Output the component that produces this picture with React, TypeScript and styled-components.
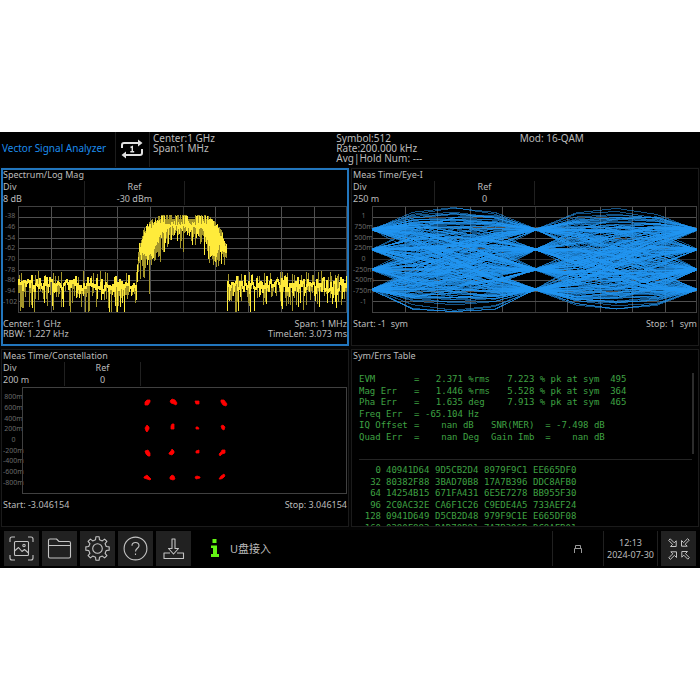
import React from 'react';
import styled, { createGlobalStyle } from 'styled-components';

const GlobalStyle = createGlobalStyle`
  * { box-sizing: border-box; }
  body {
    margin: 0;
    background: #fff;
    font-family: "Noto Sans", "Noto Sans CJK SC", sans-serif;
  }
`;

const Stage = styled.main`
  min-height: 100vh;
  display: flex;
  flex-direction: column;
  justify-content: center;
`;

const Screen = styled.div`
  background: #040404;
  color: #bcbcbc;
  font-size: 10px;
`;

const Header = styled.header`
  display: grid;
  grid-template-columns: 115px 35px 26fr 26fr 26fr;
  height: 35px;
  background: #000;
  line-height: 10px;
`;

const AppTitle = styled.h1`
  margin: 0;
  padding: 0 0 3px 2px;
  display: flex;
  align-items: center;
  font-size: 10px;
  font-weight: 400;
  color: #1c8cec;
  white-space: nowrap;
`;

const SweepButton = styled.button`
  border: solid #1c1c1c;
  border-width: 0 1px;
  padding: 0 2px 2px 0;
  background: none;
  display: grid;
  place-items: center;
`;

const HeaderInfo = styled.div`
  padding: 1px 0 0 3px;
  white-space: pre;
`;

const Panels = styled.section`
  display: grid;
  grid-template-columns: 1fr 1fr;
  gap: 3px 2px;
  padding: 1px 1px 3px;
`;

const Panel = styled.article<{ $active?: boolean }>`
  display: flex;
  flex-direction: column;
  min-width: 0;
  height: 178px;
  background: #000;
  border: ${(p) => (p.$active ? '2px solid #2276bd' : '1px solid #1b1b1b')};
  padding: ${(p) => (p.$active ? '0' : '1px 1px 0')};
  overflow: hidden;
`;

const PanelTitle = styled.h2`
  margin: 0 0 2px;
  font-size: 9px;
  font-weight: 400;
  line-height: 9px;
  white-space: nowrap;
`;

const Readouts = styled.dl<{ $first: number; $second: number }>`
  margin: 0;
  height: 25px;
  display: grid;
  grid-template-columns: ${(p) => `${p.$first}px ${p.$second}px`};
  line-height: 12px;
  font-size: 9px;
`;

const Readout = styled.div<{ $centered?: boolean }>`
  height: 24px;
  border-right: 1px solid #202020;
  text-align: ${(p) => (p.$centered ? 'center' : 'left')};
  dt, dd { margin: 0; }
`;

const PlotRow = styled.div<{ $axis: number }>`
  display: grid;
  grid-template-columns: ${(p) => p.$axis}px 1fr;
  height: 107px;
`;

const Axis = styled.ol`
  list-style: none;
  margin: 0;
  padding: 5px 2px 6px 0;
  display: grid;
  grid-template-rows: repeat(9, 1fr);
  align-items: center;
  justify-items: center;
  font-size: 7px;
  line-height: 8px;
  color: #6a6a6a;
`;

const Plot = styled.svg`
  display: block;
  width: 100%;
  height: 107px;
`;

const PlotFooter = styled.footer`
  display: flex;
  justify-content: space-between;
  padding-top: 6px;
  font-size: 9px;
  line-height: 10px;
  white-space: pre;
`;

const RightText = styled.div`
  text-align: right;
`;

const ErrorArea = styled.div`
  display: flex;
  justify-content: space-between;
  margin: 11px 3px 5px 6px;
  height: 81px;
`;

const ScrollThumb = styled.div`
  width: 2px;
  background: #2c2c2c;
`;

const MonoTable = styled.table`
  border-collapse: collapse;
  table-layout: fixed;
  font-family: "DejaVu Sans Mono", monospace;
  font-size: 9px;
  line-height: 11px;
  color: #3fa243;
  th, td {
    padding: 0;
    font-weight: 400;
    text-align: left;
    white-space: pre;
  }
`;

const ErrorTable = styled(MonoTable)`
  width: 290px;
  height: 69px;
  margin-top: 1px;
`;

const SymbolTable = styled(MonoTable)`
  width: 224px;
  height: 69px;
  th { text-align: right; padding-right: 5px; }
`;

const SymbolArea = styled.div`
  flex: 1 1 0;
  min-height: 0;
  overflow: hidden;
  margin: 0 5px 0 6px;
  padding-top: 5px;
  border-top: 1px solid #242424;
`;

const StatusBar = styled.footer`
  display: flex;
  align-items: center;
  height: 38px;
  padding: 0 4px 1px;
  background: #000;
`;

const Tools = styled.nav`
  display: flex;
  gap: 3px;
`;

const ToolButton = styled.button`
  width: 35px;
  height: 35px;
  padding: 0;
  border: 0;
  background: #212121;
  color: #c4c4c4;
  display: grid;
  place-items: center;
`;

const Message = styled.div`
  flex: 1;
  display: flex;
  align-items: center;
  gap: 10px;
  padding: 0 0 1px 19px;
  font-size: 11px;
`;

const UsbStatus = styled.div`
  width: 52px;
  height: 35px;
  border: solid #202020;
  border-width: 0 1px;
  display: grid;
  place-items: center;
`;

const Clock = styled.time`
  width: 54px;
  height: 35px;
  border-right: 1px solid #202020;
  margin-right: 3px;
  padding-top: 6px;
  text-align: center;
  font-size: 9px;
  line-height: 12px;
  white-space: nowrap;
`;

function createRandom(seed: number) {
  let s = seed;
  return () => {
    s = (s * 1664525 + 1013904223) % 4294967296;
    return s / 4294967296;
  };
}

function interpolate(points: number[][], x: number) {
  for (let i = 1; i < points.length; i++) {
    const [x0, y0] = points[i - 1];
    const [x1, y1] = points[i];
    if (x <= x1) return y0 + ((y1 - y0) * (x - x0)) / (x1 - x0);
  }
  return points[points.length - 1][1];
}

/* Upper edge of the signal band, and the lower edge of its dense part. */
const bandTop = [[119, 54], [121, 37], [124, 26], [129, 17], [136, 12], [143, 9], [188, 9], [193, 12], [200, 19], [205, 28], [208, 36], [209, 56]];
const bandBase = [[119, 62], [121, 50], [126, 51], [133, 51], [138, 42], [143, 29], [153, 24], [160, 22], [184, 26], [188, 34], [194, 50], [198, 54], [201, 42], [208, 50], [209, 70]];

function buildSpectrum() {
  const rnd = createRandom(77);
  let bright = '';
  let dim = '';
  let level = 76;
  for (let x = 0; x < 329; x++) {
    const px = x + 0.5;
    if (x >= 119 && x <= 208) {
      const top = interpolate(bandTop, x);
      const base = interpolate(bandBase, x);
      const edge = x < 142 || x > 188;
      const low = Math.min(base + 2 + rnd() * rnd() * 24, 76);
      const high = top + (edge ? rnd() * 8 : rnd() < 0.25 ? 1 : 6 + rnd() * 4);
      const mid = edge ? base - rnd() * 4 : base - 4 + rnd() * 5;
      bright += `M${px} ${high.toFixed(1)}V${mid.toFixed(1)}`;
      dim += `M${px} ${(top + (rnd() < 0.5 ? 0 : 4)).toFixed(1)}V${high.toFixed(1)}M${px} ${mid.toFixed(1)}V${low.toFixed(1)}`;
      if (rnd() < 0.3) bright += `M${px} ${mid.toFixed(1)}V${low.toFixed(1)}`;
      if (x === 131) dim += `M${px} 50V88`;
    } else {
      const next = 68 + (rnd() + rnd()) * 9;
      const a = Math.min(level, next);
      const b = Math.max(level, next) + 3;
      bright += `M${px} ${a.toFixed(1)}V${b.toFixed(1)}`;
      if (rnd() < 0.2) dim += `M${px} ${(65 + rnd() * 6).toFixed(1)}V${a.toFixed(1)}`;
      if (rnd() < 0.75) {
        const drop = Math.min(b + 3 + rnd() * rnd() * 34, 106);
        if (rnd() < 0.4) bright += `M${px} ${b.toFixed(1)}V${drop.toFixed(1)}`;
        else dim += `M${px} ${b.toFixed(1)}V${drop.toFixed(1)}`;
      }
      level = next;
    }
  }
  return { bright, dim };
}

/* Raised-cosine pulse response at t symbol periods. */
function pulse(t: number) {
  if (Math.abs(t) < 1e-6) return 1;
  const roll = 0.22;
  const sinc = Math.sin(Math.PI * t) / (Math.PI * t);
  const den = 1 - (2 * roll * t) ** 2;
  return (sinc * Math.cos(Math.PI * roll * t)) / den;
}

function buildEye() {
  const rnd = createRandom(2024);
  const paths: string[] = [];
  for (let n = 0; n < 270; n++) {
    const symbols = Array.from({ length: 11 }, () => Math.floor(rnd() * 4) * 2 - 3 + (rnd() - 0.5) * 0.2);
    let d = '';
    for (let k = 0; k <= 8; k++) {
      const t = 4 + k / 4;
      const value = symbols.reduce((sum, s, i) => sum + s * pulse(t - i), 0);
      const y = 53.5 - Math.max(-5.2, Math.min(5.2, value * (k % 4 ? 1.06 : 1))) * 10;
      const x = k <= 4 ? k * 41 : 164 + (k - 4) * 40.25;
      d += `${k ? 'L' : 'M'}${x} ${y.toFixed(1)}`;
    }
    paths.push(d);
  }
  return paths;
}

const spectrum = buildSpectrum();
const eye = buildEye();
const steps = [1, 2, 3, 4, 5, 6, 7, 8, 9];

function Grid({ width }: { width: number }) {
  return (
    <g shapeRendering="crispEdges" fill="none" strokeWidth="1">
      {steps.map((i) => (
        <path key={i} stroke={i === 5 ? '#2e2e2e' : '#505050'}
          d={`M0 ${Math.round(i * 10.6) + 0.5}H${width}M${Math.round((i * width) / 10) + 0.5} 0V106`} />
      ))}
      <rect x="0.5" y="0.5" width={width - 1} height="106" stroke="#404040" />
    </g>
  );
}

const clusters = [
  'M123 15l2-2 3 0 0 2-2 3-3 0z', 'M148 14l2-2 3 1 2 3-1 2-2-1-3-1z', 'M173 14l4 0 0 3-3 0z', 'M199 13l3 0 3 4-1 2-3-1-2-3z',
  'M123 41l2-3 2 2 0 2-2 3-1-1z', 'M149 39l1-2 2 0 0 5-3 0z', 'M174 40l2 0 1 2-3 0z', 'M199 39l2-1 2 2-1 3-2-1z',
  'M123 64l3-1 2 3 0 3-2 0-2-2z', 'M147 66l2-2 1-2 2 2 0 2-2 2-3-1z', 'M174 64l3-1 0 3-3 0z', 'M197 67l2-2 1-2 3 0 0 3-3 1-2 2z',
  'M122 90l3-2 2 2 2 2-1 1-3-1-3-1z', 'M148 90l2-2 2 1 1 3-2 1-3-1z', 'M173 90l2-1 3 1 0 1-4 1z', 'M197 92l2-3 3-2 1 2-2 2-2 1z',
];

interface PanelInfoProps {
  div: string;
  reference: string;
  first?: number;
  second?: number;
}

function PanelInfo({ div, reference, first = 82, second = 100 }: PanelInfoProps) {
  return (
    <Readouts $first={first} $second={second}>
      <Readout><dt>Div</dt><dd>{div}</dd></Readout>
      <Readout $centered><dt>Ref</dt><dd>{reference}</dd></Readout>
    </Readouts>
  );
}

function AxisLabels({ labels }: { labels: string[] }) {
  return <Axis>{labels.map((label) => <li key={label}>{label}</li>)}</Axis>;
}

const errorRows = [
  ['EVM', '  2.371 %rms', '   7.223 % pk at sym  495'],
  ['Mag Err', '  1.446 %rms', '   5.528 % pk at sym  364'],
  ['Pha Err', '  1.635 deg', '   7.913 % pk at sym  465'],
  ['Freq Err', '-65.104 Hz', ''],
  ['IQ Offset', '   nan dB', 'SNR(MER)  = -7.498 dB'],
  ['Quad Err', '   nan Deg', 'Gain Imb  =    nan dB'],
];

const symbolRows = [
  ['0', '40941D64', '9D5CB2D4', '8979F9C1', 'EE665DF0'],
  ['32', '80382F88', '3BAD70B8', '17A7B396', 'DDC8AFB0'],
  ['64', '14254B15', '671FA431', '6E5E7278', 'BB955F30'],
  ['96', '2C0AC32E', 'CA6F1C26', 'C9EDE4A5', '733AEF24'],
  ['128', '0941D649', 'D5CB2D48', '979F9C1E', 'E665DF08'],
  ['160', '0380F883', 'BAD70B81', '7A7B396D', 'DC8AFB01'],
];

function ToolIcon({ children }: { children: React.ReactNode }) {
  return (
    <svg width="25" height="25" viewBox="0 0 25 25" fill="none" stroke="currentColor" strokeWidth="1.1" strokeLinejoin="round" aria-hidden="true">
      {children}
    </svg>
  );
}

const gearPath = (() => {
  const points: string[] = [];
  for (let i = 0; i < 8; i++) {
    [[-0.22, 9], [-0.14, 11.8], [0.14, 11.8], [0.22, 9]].forEach(([offset, radius]) => {
      const angle = (i * Math.PI) / 4 + offset;
      points.push(`${(12.5 + radius * Math.sin(angle)).toFixed(2)} ${(12.5 - radius * Math.cos(angle)).toFixed(2)}`);
    });
  }
  return `M${points.join('L')}Z`;
})();

export default function App() {
  return (
    <>
      <GlobalStyle />
      <Stage>
        <Screen>
          <Header>
            <AppTitle>Vector Signal Analyzer</AppTitle>
            <SweepButton aria-label="Single sweep">
              <svg width="22" height="20" viewBox="0 0 22 20" fill="none" stroke="#e0e0e0" strokeWidth="2" aria-hidden="true">
                <path d="M1 9V6Q1 4 3 4H18M21 10V14Q21 16 19 16H4" />
                <path d="M17 0.5L21.5 4L17 7.5ZM5 12.5L0.5 16L5 19.5Z" fill="#e0e0e0" stroke="none" />
                <path d="M9.5 8.5L11.3 7.7V12.7M9.3 12.7H13.2" strokeWidth="1.4" />
              </svg>
            </SweepButton>
            <HeaderInfo>{'Center:1 GHz\nSpan:1 MHz'}</HeaderInfo>
            <HeaderInfo>{'Symbol:512\nRate:200.000 kHz\nAvg|Hold Num: ---'}</HeaderInfo>
            <HeaderInfo>Mod: 16-QAM</HeaderInfo>
          </Header>

          <Panels>
            <Panel $active>
              <PanelTitle>Spectrum/Log Mag</PanelTitle>
              <PanelInfo div="8 dB" reference="-30 dBm" />
              <PlotRow $axis={15}>
                <AxisLabels labels={['-38', '-46', '-54', '-62', '-70', '-78', '-86', '-94', '-102']} />
                <Plot viewBox="0 0 329 107" preserveAspectRatio="none" role="img" aria-label="Spectrum trace">
                  <Grid width={329} />
                  <g shapeRendering="crispEdges" fill="none">
                    <path d={spectrum.dim} stroke="#a3952a" />
                    <path d={spectrum.bright} stroke="#ffeb3b" />
                  </g>
                </Plot>
              </PlotRow>
              <PlotFooter>
                <div>{'Center: 1 GHz\nRBW: 1.227 kHz'}</div>
                <RightText>{'Span: 1 MHz\nTimeLen: 3.073 ms'}</RightText>
              </PlotFooter>
            </Panel>

            <Panel>
              <PanelTitle>Meas Time/Eye-I</PanelTitle>
              <PanelInfo div="250 m" reference="0" />
              <PlotRow $axis={19}>
                <AxisLabels labels={['1', '750m', '500m', '250m', '0', '-250m', '-500m', '-750m', '-1']} />
                <Plot viewBox="0 0 325 107" preserveAspectRatio="none" role="img" aria-label="Eye diagram">
                  <Grid width={325} />
                  <g shapeRendering="crispEdges" fill="none" stroke="#2196f3" strokeOpacity="0.55">
                    {eye.map((d, i) => <path key={i} d={d} />)}
                  </g>
                </Plot>
              </PlotRow>
              <PlotFooter>
                <div>Start: -1  sym</div>
                <RightText>Stop: 1  sym</RightText>
              </PlotFooter>
            </Panel>

            <Panel>
              <PanelTitle>Meas Time/Constellation</PanelTitle>
              <PanelInfo div="200 m" reference="0" first={62} second={76} />
              <PlotRow $axis={19}>
                <AxisLabels labels={['800m', '600m', '400m', '200m', '0', '-200m', '-400m', '-600m', '-800m']} />
                <Plot viewBox="0 0 325 107" preserveAspectRatio="none" role="img" aria-label="Constellation diagram">
                  <rect x="0.5" y="0.5" width="324" height="106" fill="none" stroke="#404040" shapeRendering="crispEdges" />
                  <path d={clusters.join('')} fill="#f00" stroke="#f00" strokeWidth="0.8" />
                </Plot>
              </PlotRow>
              <PlotFooter>
                <div>Start: -3.046154</div>
                <RightText>Stop: 3.046154</RightText>
              </PlotFooter>
            </Panel>

            <Panel>
              <PanelTitle>Sym/Errs Table</PanelTitle>
              <ErrorArea>
                <ErrorTable>
                  <colgroup>
                    <col width="55" />
                    <col width="11" />
                    <col width="66" />
                    <col />
                  </colgroup>
                  <tbody>
                    {errorRows.map(([name, value, detail]) => (
                      <tr key={name}>
                        <th scope="row">{name}</th>
                        <td>=</td>
                        <td>{value}</td>
                        <td>{detail}</td>
                      </tr>
                    ))}
                  </tbody>
                </ErrorTable>
                <ScrollThumb />
              </ErrorArea>
              <SymbolArea>
                <SymbolTable>
                  <colgroup>
                    <col width="27" />
                    <col width="49" />
                    <col width="49" />
                    <col width="49" />
                    <col />
                  </colgroup>
                  <tbody>
                    {symbolRows.map(([index, ...words]) => (
                      <tr key={index}>
                        <th scope="row">{index}</th>
                        {words.map((word) => <td key={word}>{word}</td>)}
                      </tr>
                    ))}
                  </tbody>
                </SymbolTable>
              </SymbolArea>
            </Panel>
          </Panels>

          <StatusBar>
            <Tools aria-label="Tools">
              <ToolButton aria-label="Screenshot">
                <ToolIcon>
                  <path d="M1 6V3Q1 1 3 1H6M19 1H22Q24 1 24 3V6M24 19V22Q24 24 22 24H19M6 24H3Q1 24 1 22V19" />
                  <rect x="5.5" y="5.5" width="14" height="14" rx="1" />
                  <path d="M5.5 15L9.5 11.5L13 15.5L15.5 13.5L19.5 17" />
                  <circle cx="15" cy="9.5" r="1.2" />
                </ToolIcon>
              </ToolButton>
              <ToolButton aria-label="Files">
                <ToolIcon>
                  <path d="M1.5 20.5V4.5Q1.5 3 3 3H9.5L12 5.5H22Q23.5 5.5 23.5 7V20.5Q23.5 22 22 22H3Q1.5 22 1.5 20.5ZM1.5 9.5H23.5" />
                </ToolIcon>
              </ToolButton>
              <ToolButton aria-label="Settings">
                <ToolIcon>
                  <path d={gearPath} />
                  <circle cx="12.5" cy="12.5" r="4.8" />
                </ToolIcon>
              </ToolButton>
              <ToolButton aria-label="Help">
                <ToolIcon>
                  <circle cx="12.5" cy="12.5" r="11.4" />
                  <path d="M9 9.7C9 5.5 16 5.5 16 9.7C16 12.2 12.5 12.4 12.5 15.5M12.5 17.5V19" />
                </ToolIcon>
              </ToolButton>
              <ToolButton aria-label="Save">
                <ToolIcon>
                  <path d="M11 3H14V12.5H17.5L12.5 18L7.5 12.5H11ZM9 17H3V22.5H22.5V17H16" />
                </ToolIcon>
              </ToolButton>
            </Tools>
            <Message role="status">
              <svg width="10" height="18" viewBox="0 0 10 18" fill="#64f514" aria-hidden="true">
                <path d="M2.5 0H6.5V4H2.5ZM1 6.5H7V15H9V18H1V15H3V9H1Z" />
              </svg>
              U盘接入
            </Message>
            <UsbStatus>
              <svg width="8" height="8" viewBox="0 0 8 8" fill="none" stroke="#999" aria-label="USB drive">
                <path d="M1.5 3.5V0.5H6.5V3.5M0.5 8V3.5H7.5V8" />
              </svg>
            </UsbStatus>
            <Clock>12:13<br />2024-07-30</Clock>
            <ToolButton aria-label="Exit full screen">
              <svg width="22" height="22" viewBox="0 0 22 22" fill="none" stroke="#c4c4c4" strokeWidth="1" aria-hidden="true">
                <path id="arrow" d="M2.2 0.8L6.2 4.8L8.2 2.8V8.5H2.5L4.6 6.4L0.7 2.4Z" />
                <use href="#arrow" transform="rotate(90 11 11)" />
                <use href="#arrow" transform="rotate(180 11 11)" />
                <use href="#arrow" transform="rotate(270 11 11)" />
              </svg>
            </ToolButton>
          </StatusBar>
        </Screen>
      </Stage>
    </>
  );
}
